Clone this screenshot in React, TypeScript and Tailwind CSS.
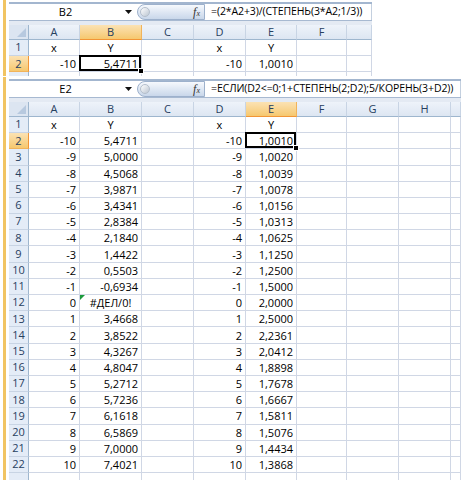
import React from 'react';

type Col = { label: string; w: string };

const colsTop: Col[] = [
  { label: 'A', w: 'w-[51px]' },
  { label: 'B', w: 'w-[62px]' },
  { label: 'C', w: 'w-[52px]' },
  { label: 'D', w: 'w-[52px]' },
  { label: 'E', w: 'w-[51px]' },
  { label: 'F', w: 'w-[50px]' },
  { label: '', w: 'w-[25px]' },
];

const colsBottom: Col[] = [
  { label: 'A', w: 'w-[51px]' },
  { label: 'B', w: 'w-[62px]' },
  { label: 'C', w: 'w-[52px]' },
  { label: 'D', w: 'w-[52px]' },
  { label: 'E', w: 'w-[51px]' },
  { label: 'F', w: 'w-[50px]' },
  { label: 'G', w: 'w-[52px]' },
  { label: 'H', w: 'w-[52px]' },
  { label: '', w: 'w-[10px]' },
];

const yLeft = [
  '5,4711', '5,0000', '4,5068', '3,9871', '3,4341', '2,8384', '2,1840', '1,4422', '0,5503', '-0,6934',
  '#ДЕЛ/0!', '3,4668', '3,8522', '4,3267', '4,8047', '5,2712', '5,7236', '6,1618', '6,5869', '7,0000', '7,4021',
];

const yRight = [
  '1,0010', '1,0020', '1,0039', '1,0078', '1,0156', '1,0313', '1,0625', '1,1250', '1,2500', '1,5000',
  '2,0000', '2,5000', '2,2361', '2,0412', '1,8898', '1,7678', '1,6667', '1,5811', '1,5076', '1,4434', '1,3868',
];

const topRows: string[][] = [
  ['x', 'Y', '', 'x', 'Y'],
  ['-10', '5,4711', '', '-10', '1,0010'],
];

const bottomRows: string[][] = [
  ['x', 'Y', '', 'x', 'Y'],
  ...yLeft.map((y, i) => [String(i - 10), y, '', String(i - 10), yRight[i]]),
];

const Cell: React.FC<{ value: string; w: string; selected?: boolean; warn?: boolean }> = ({
  value,
  w,
  selected,
  warn,
}) => {
  const isNum = /^-?\d/.test(value);
  return (
    <div
      className={`relative ${w} shrink-0 h-full border-r border-b border-[#d0d7e5] flex items-center ${
        isNum ? 'justify-end pr-[3px]' : 'justify-center'
      }`}
    >
      {warn && (
        <div className="absolute left-0 top-0 w-0 h-0 border-t-[5px] border-r-[5px] border-t-[#1d9a3c] border-r-transparent" />
      )}
      <span className="leading-none">{value}</span>
      {selected && (
        <>
          <div className="absolute -left-px -top-px right-0 bottom-0 border-2 border-black z-10" />
          <div className="absolute -right-[3px] -bottom-[3px] w-[6px] h-[6px] bg-black border border-white z-20" />
        </>
      )}
    </div>
  );
};

const FormulaBar: React.FC<{ name: string; formula: string }> = ({ name, formula }) => (
  <div className="flex h-[17px] bg-white border-b border-[#a7b9d1]">
    <div className="w-[113px] flex items-center justify-center text-[11px] text-black">{name}</div>
    <div className="w-[13px] flex items-center justify-center">
      <svg width="7" height="4" viewBox="0 0 7 4">
        <path d="M0 0h7L3.5 4z" fill="#111" />
      </svg>
    </div>
    <div className="w-[2px]" />
    <div className="w-[68px] flex items-center justify-between rounded-l-full border border-[#9db1cc] bg-gradient-to-b from-[#f6f9fd] to-[#c9d7ea] pl-[2px] pr-[4px]">
      <div className="w-[10px] h-[10px] rounded-full border border-[#b4bfcc] bg-gradient-to-br from-[#ffffff] to-[#bcc6d2]" />
      <span className="font-['Liberation_Serif',serif] italic text-[12px] text-[#333] leading-none">
        f<span className="text-[8px]">x</span>
      </span>
    </div>
    <div className="flex-1 flex items-center pl-[6px] text-[10.5px] tracking-[-0.1px] text-black whitespace-nowrap overflow-hidden border-r border-[#c4d0df]">
      {formula}
    </div>
  </div>
);

const Sheet: React.FC<{
  name: string;
  formula: string;
  cols: Col[];
  rows: string[][];
  selCol: number;
  extraRow: string;
  width: string;
}> = ({ name, formula, cols, rows, selCol, extraRow, width }) => (
  <div className="flex bg-white">
    <div className="w-[3px] shrink-0" />
    <div className="w-[3px] shrink-0 bg-[#f1c462]" />
    <div className="w-[3px] shrink-0" />
    <div className={`flex flex-col ${width}`}>
      <div className="h-[2px]" />
      <div className="h-[2px] bg-[#a3b6cf]" />
      <FormulaBar name={name} formula={formula} />
      <div className="h-[4px] bg-[#e4eaf3]" />

      {/* column headers */}
      <div className="flex h-[15px] text-[11px] text-[#27405f]">
        <div className="relative w-[20px] shrink-0 bg-[#dce5f1] border-r border-b border-[#9eb6ce]">
          <svg className="absolute right-[2px] bottom-[2px]" width="9" height="9" viewBox="0 0 9 9">
            <path d="M9 0V9H0z" fill="#b7c9df" />
          </svg>
        </div>
        {cols.map((c, i) => (
          <div
            key={i}
            className={`${c.w} shrink-0 flex items-center justify-center border-r border-b ${
              i === selCol
                ? 'bg-gradient-to-b from-[#fbe2b3] to-[#f6c86e] border-r-[#f1b35a] border-b-[#f29536]'
                : 'bg-gradient-to-b from-[#eef3fa] to-[#dde6f2] border-r-[#c8d4e4] border-b-[#9eb6ce]'
            }`}
          >
            {c.label}
          </div>
        ))}
      </div>

      {/* rows */}
      {rows.map((r, ri) => (
        <div key={ri} className="flex h-[16.2px] text-[11px] text-black">
          <div
            className={`w-[20px] shrink-0 flex items-center justify-center border-r border-b text-[#27405f] ${
              ri === 1
                ? 'bg-gradient-to-b from-[#fbe2b3] to-[#f6c86e] border-r-[#f29536] border-b-[#f1b35a]'
                : 'bg-[#e4ecf7] border-r-[#9eb6ce] border-b-[#c8d4e4]'
            }`}
          >
            {ri + 1}
          </div>
          {cols.map((c, ci) => (
            <Cell
              key={ci}
              value={r[ci] ?? ''}
              w={c.w}
              selected={ri === 1 && ci === selCol}
              warn={ci === 1 && r[ci] === '#ДЕЛ/0!'}
            />
          ))}
        </div>
      ))}
      <div className={`flex ${extraRow} overflow-hidden`}>
        <div className="w-[20px] shrink-0 h-[16px] bg-[#e4ecf7] border-r border-[#9eb6ce]" />
        {cols.map((c, ci) => (
          <div key={ci} className={`${c.w} shrink-0 h-[16px] border-r border-[#d0d7e5]`} />
        ))}
      </div>
    </div>
  </div>
);

export default function App() {
  return (
    <div className="w-[461px] h-[480px] overflow-hidden bg-white font-['Open_Sans','Noto_Sans',sans-serif]">
      <Sheet
        name="B2"
        formula="=(2*A2+3)/(СТЕПЕНЬ(3*A2;1/3))"
        cols={colsTop}
        rows={topRows}
        selCol={1}
        extraRow="h-[3.6px]"
        width="w-[363px]"
      />
      <div className="h-px bg-white" />
      <Sheet
        name="E2"
        formula="=ЕСЛИ(D2<=0;1+СТЕПЕНЬ(2;D2);5/КОРЕНЬ(3+D2))"
        cols={colsBottom}
        rows={bottomRows}
        selCol={4}
        extraRow="h-[16px]"
        width="w-[452px]"
      />
    </div>
  );
}
